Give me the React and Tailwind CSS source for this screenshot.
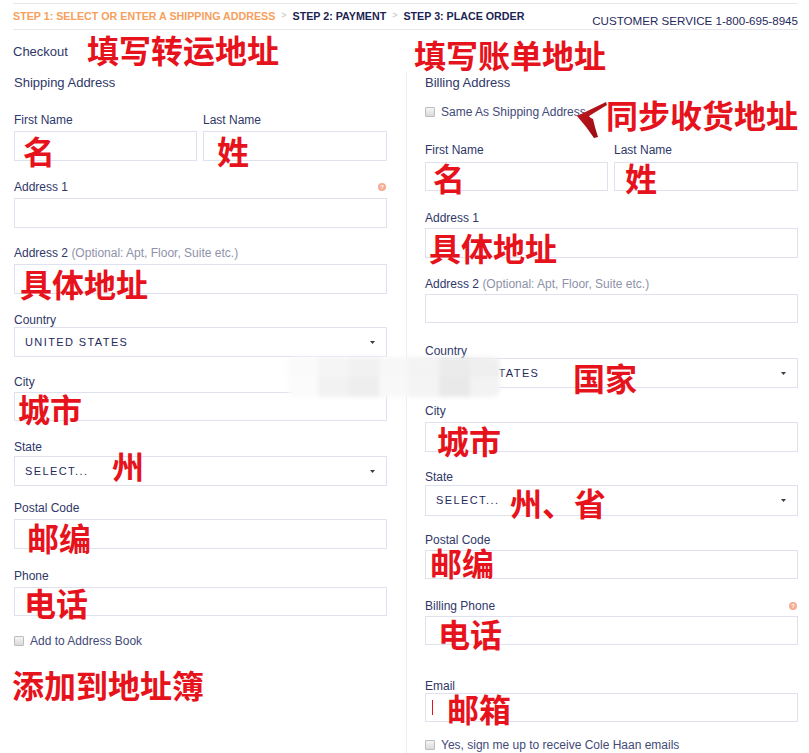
const sans = "font-['Liberation_Sans',Arial,sans-serif]"
const cjk = "font-['Noto_Sans_CJK_SC',sans-serif]"

function Note({ children, className = '' }) {
  return (
    <span className={`${cjk} font-bold text-[32px] leading-[32px] text-[#e6121c] whitespace-nowrap ${className}`}>
      {children}
    </span>
  )
}

function Help() {
  return (
    <span className="w-[8px] h-[8px] mr-px rounded-full bg-[#f6ab92] text-white text-[6px] leading-[8px] text-center font-bold">?</span>
  )
}

function Caret() {
  return (
    <svg className="w-[5px] h-[3px]" viewBox="0 0 5 3">
      <path d="M0 0h5L2.5 3z" fill="#3b3b45" />
    </svg>
  )
}

function Check({ children, className = '' }) {
  return (
    <div className={`relative flex items-center h-4 ${className}`}>
      <span className="w-[10px] h-[10px] rounded-[1px] border border-[#bdbdbd] bg-gradient-to-b from-[#f5f5f5] to-[#dadada]" />
      <span className="ml-[6px] text-[12px] leading-4 text-[#434a78]">{children}</span>
    </div>
  )
}

function Field({ label, extra, help, className = '', gap = 'mt-[3px]', h = 'h-[30px]', select, note, noteClass = '', cursor }) {
  return (
    <div className={className}>
      <div className="flex items-center justify-between text-[12px] leading-4 text-[#2f3768]">
        <span>
          {label}
          {extra && <span className="text-[#8e92aa]"> {extra}</span>}
        </span>
        {help && <Help />}
      </div>
      <div className={`relative ${gap} ${h} border border-[#dfe1ef] bg-white`}>
        {select && (
          <div className="h-full flex items-center justify-between pl-[10px] pr-[11px]">
            <span className="text-[11px] tracking-[1.4px] text-[#1f2a5c]">{select}</span>
            <Caret />
          </div>
        )}
        {cursor && <span className="absolute left-[6px] top-[6px] w-px h-[15px] bg-[#e6121c]" />}
        {note && <Note className={`absolute ${noteClass}`}>{note}</Note>}
      </div>
    </div>
  )
}

function Smudge() {
  const cells = [
    'bg-[#fafafa]', 'bg-[#f5f5f5]', 'bg-[#f1f1f1]', 'bg-[#f7f7f7]', 'bg-[#f3f3f3]', 'bg-[#ebebeb]', 'bg-[#efefef]',
    'bg-[#fbfbfb]', 'bg-[#f2f2f2]', 'bg-[#eeeeee]', 'bg-[#f8f8f8]', 'bg-[#f4f4f4]', 'bg-[#e9e9e9]', 'bg-[#f3f3f3]',
  ]
  return (
    <div className="absolute left-[288px] top-[357px] w-[212px] h-[40px] bg-[#f6f6f6] blur-[2px] grid grid-cols-7 grid-rows-2 rounded-[8px] overflow-hidden">
      {cells.map((c, i) => <div key={i} className={c} />)}
    </div>
  )
}

export default function App() {
  return (
    <div className={`relative w-[809px] h-[753px] overflow-hidden bg-white flex flex-col ${sans}`}>
      {/* steps bar */}
      <div className="mt-[3px] ml-[13px] w-[785px] h-[27px] border-y border-[#e7e7ec] flex justify-between">
        <div className="pt-[4px] flex items-center h-[20px] text-[10.7px] font-bold">
          <span className="text-[#f6a05c]">STEP 1: SELECT OR ENTER A SHIPPING ADDRESS</span>
          <span className="mx-[6px] text-[9px] text-[#cfcfcf]">&gt;</span>
          <span className="text-[#1c2452]">STEP 2: PAYMENT</span>
          <span className="mx-[6px] text-[9px] text-[#cfcfcf]">&gt;</span>
          <span className="text-[#1c2452]">STEP 3: PLACE ORDER</span>
        </div>
        <div className="pt-[10px] text-[11.6px] leading-[14px] text-[#1f2a5c]">
          CUSTOMER SERVICE 1-800-695-8945
        </div>
      </div>

      <div className="flex-1 flex ml-[13px]">
        {/* shipping */}
        <div className="w-[393px] flex flex-col">
          <div className="mt-[3px] flex items-start h-[32px]">
            <span className="w-[74px] mt-[11px] text-[13px] leading-4 text-[#2f3768]">Checkout</span>
            <Note>填写转运地址</Note>
          </div>
          <div className="w-[374px] pl-px">
            <div className="mt-[10px] text-[13px] leading-4 text-[#2f3768]">Shipping Address</div>
            <div className="mt-[21px] grid grid-cols-[183px_184px] gap-x-[6px]">
              <Field label="First Name" note="名" noteClass="left-[8px] top-[2px]" />
              <Field label="Last Name" note="姓" noteClass="left-[13px] top-[2px]" />
            </div>
            <Field className="mt-[18px]" label="Address 1" help />
            <Field className="mt-[17px]" label="Address 2" extra="(Optional: Apt, Floor, Suite etc.)" note="具体地址" noteClass="left-[5px] top-[2px]" />
            <Field className="mt-[18px]" label="Country" gap="-mt-px" select="UNITED STATES" />
            <Field className="mt-[17px]" label="City" gap="mt-[2px]" h="h-[29px]" note="城市" noteClass="left-[3px] -top-[1px]" />
            <Field className="mt-[18px]" label="State" gap="mt-px" select="SELECT..." note="州" noteClass="left-[97px] -top-[8px]" />
            <Field className="mt-[14px]" label="Postal Code" note="邮编" noteClass="left-[12px] top-[1px]" />
            <Field className="mt-[19px]" label="Phone" h="h-[29px]" note="电话" noteClass="left-[9px] -top-[2px]" />
            <Check className="mt-[17px]">Add to Address Book</Check>
            <Note className="block -ml-[2px] mt-[19px]">添加到地址簿</Note>
          </div>
        </div>

        {/* billing */}
        <div className="flex-1 flex flex-col">
          <Note className="block mt-[8px] ml-[8px] h-[32px]">填写账单地址</Note>
          <div className="flex-1 mt-[2px] border-l border-[#ececf2] pl-[18px]">
            <div className="w-[373px]">
              <div className="pt-[3px] text-[13px] leading-4 text-[#2f3768]">Billing Address</div>
              <Check className="mt-[13px]">
                Same As Shipping Address
                <svg className="absolute left-[151px] -top-[3px] w-[34px] h-[38px]" viewBox="0 0 34 38">
                  <defs>
                    <linearGradient id="ar" x1="0" y1="0" x2="1" y2="1">
                      <stop offset="0" stopColor="#cc1820" />
                      <stop offset="1" stopColor="#8a0b10" />
                    </linearGradient>
                  </defs>
                  <path d="M1 15 L30 1 L31 4 L13 15 Q14 17 17 18 Q19 27 22 36 L18 37 Q10 25 1 15 Z" fill="url(#ar)" />
                </svg>
                <Note className="absolute left-[181px] -top-[6px]">同步收货地址</Note>
              </Check>
              <div className="mt-[22px] grid grid-cols-[183px_184px] gap-x-[6px]">
                <Field label="First Name" gap="mt-[4px]" h="h-[29px]" note="名" noteClass="left-[7px] -top-[2px]" />
                <Field label="Last Name" gap="mt-[4px]" h="h-[29px]" note="姓" noteClass="left-[10px] -top-[2px]" />
              </div>
              <Field className="mt-[19px]" label="Address 1" gap="mt-[2px]" note="具体地址" noteClass="left-[3px] top-[2px]" />
              <Field className="mt-[18px]" label="Address 2" extra="(Optional: Apt, Floor, Suite etc.)" gap="mt-[2px]" h="h-[29px]" />
              <Field className="mt-[20px]" label="Country" gap="-mt-px" select="UNITED STATES" note="国家" noteClass="left-[147px] top-[2px]" />
              <Field className="mt-[15px]" label="City" note="城市" noteClass="left-[11px] top-[1px]" />
              <Field className="mt-[17px]" label="State" gap="mt-0" h="h-[31px]" select="SELECT..." note="州、省" noteClass="left-[84px] top-0" />
              <Field className="mt-[16px]" label="Postal Code" gap="mt-[2px]" h="h-[29px]" note="邮编" noteClass="left-[4px] -top-[5px]" />
              <Field className="mt-[19px]" label="Billing Phone" help gap="mt-[2px]" h="h-[29px]" note="电话" noteClass="left-[12px] top-0" />
              <Field className="mt-[33px]" label="Email" gap="-mt-px" h="h-[29px]" cursor note="邮箱" noteClass="left-[21px] -top-[2px]" />
              <Check className="mt-[15px]">Yes, sign me up to receive Cole Haan emails</Check>
            </div>
          </div>
        </div>
      </div>

      <Smudge />
    </div>
  )
}
